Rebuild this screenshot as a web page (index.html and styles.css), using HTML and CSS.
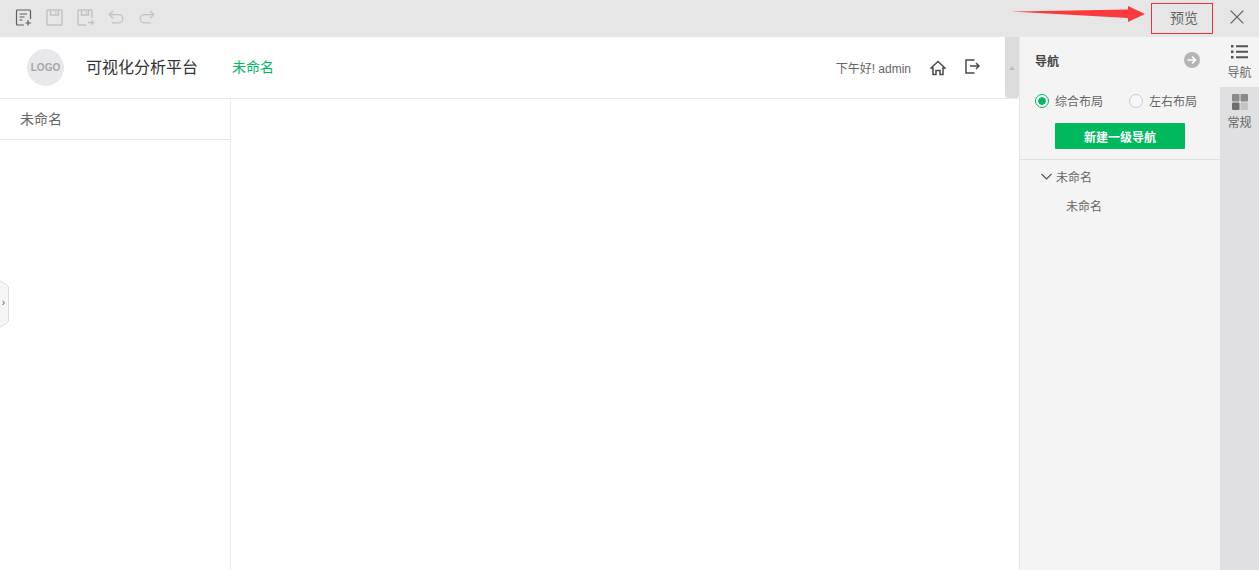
FILE: index.html
```html
<!DOCTYPE html>
<html lang="zh">
<head>
<meta charset="utf-8">
<title>可视化分析平台</title>
<link rel="stylesheet" href="styles.css">
</head>
<body>
<div class="app">
  <div class="toolbar">
    <div class="tools">
      <svg class="tool" width="17" height="17" viewBox="0 0 17 17" fill="none" stroke="#5f5f5f" stroke-width="1.2"><path d="M9 16H2.500a1 1 0 0 1-1-1V2a1 1 0 0 1 1-1h12a1 1 0 0 1 1 1v8"/><path d="M4.500 5h7.500M4.500 8h5M4.500 11h3M13 11v5.500M10.500 14H16"/></svg>
      <svg class="tool" width="17" height="17" viewBox="0 0 17 17" fill="none" stroke="#c2c2c2" stroke-width="1.4"><path d="M1.500 1h14a.5.5 0 0 1 .5.5v14a.5.5 0 0 1-.5.5h-14a.5.5 0 0 1-.5-.5v-14a.5.5 0 0 1 .5-.5z"/><path d="M4.500 1v5h8V1M10 2.500v2"/></svg>
      <svg class="tool" width="17" height="17" viewBox="0 0 17 17" fill="none" stroke="#c2c2c2" stroke-width="1.4"><path d="M9 16H1.500a.5.5 0 0 1-.5-.5v-14a.5.5 0 0 1 .5-.5h13a.5.5 0 0 1 .5.5V9"/><path d="M4.500 1v5h7V1M9.500 2.500v2M11 13.500h5.500M14.500 11.500l2 2-2 2"/></svg>
      <svg class="tool" width="17" height="14" viewBox="0 0 17 14" fill="none" stroke="#c2c2c2" stroke-width="1.3"><path d="M5 1 1.200 4.600 5 8.200M1.500 4.600h9.200a4 4 0 0 1 0 8.200H4"/></svg>
      <svg class="tool" width="16" height="14" viewBox="0 0 16 14" fill="none" stroke="#c2c2c2" stroke-width="1.3"><path d="M11 1l3.800 3.600L11 8.200M14.500 4.600H5.300a4 4 0 0 0 0 8.200H12"/></svg>
    </div>
    <div class="actions">
      <button class="preview">预览</button>
      <svg class="close" width="14" height="14" viewBox="0 0 14 14" fill="none" stroke="#5c5c5c" stroke-width="1.200"><path d="M.7.7l12.600 12.600M13.300.7.7 13.300"/></svg>
    </div>
    <svg class="arrow" width="134" height="20" viewBox="0 0 134 20"><path d="M0 8.500 117 6.500V3L134 11 117 19V15Z" fill="#fb3a3d"/></svg>
    <div class="preview-mark"></div>
  </div>
  <div class="main">
    <div class="canvas">
      <header class="top">
        <div class="logo">LOGO</div>
        <div class="brand">可视化分析平台</div>
        <div class="nav-active">未命名</div>
        <div class="user">
          <span class="greet">下午好! admin</span>
          <svg class="home" width="16" height="16" viewBox="0 0 16 16" fill="none" stroke="#4a4a4a" stroke-width="1.500"><path d="M1 8 8 1.500 15 8 13 8V14.500H10V10.500H6V14.500H3V8Z"/></svg>
          <svg class="exit" width="15" height="15" viewBox="0 0 15 15" fill="none" stroke="#4a4a4a" stroke-width="1.500"><path d="M9.500 1H1v13h8.500M5 7h9M11 4l3 3-3 3"/></svg>
        </div>
        <div class="thumb"><span class="thumb-arrow"></span></div>
      </header>
      <div class="body">
        <aside class="side"><div class="side-item">未命名</div></aside>
        <div class="stage"></div>
      </div>
      <div class="handle">
        <svg class="handle-shape" width="9" height="48" viewBox="0 0 9 48"><path d="M0 .5C2 3 8.500 4 8.500 8V40C8.500 44 2 45 0 47.500" fill="#f5f5f5" stroke="#dcdcdc"/></svg>
        <span class="handle-mark">›</span>
      </div>
    </div>
    <section class="panel">
      <div class="panel-head">
        <b>导航</b>
        <svg width="16" height="16" viewBox="0 0 16 16"><circle cx="8" cy="8" r="8" fill="#b4b4b4"/><path d="M3.500 8h8M8 4.500 11.500 8 8 11.500" fill="none" stroke="#fff" stroke-width="1.600"/></svg>
      </div>
      <div class="radios">
        <label class="radio"><i class="dot on"></i>综合布局</label>
        <label class="radio"><i class="dot"></i>左右布局</label>
      </div>
      <div class="btn-row"><button class="new">新建一级导航</button></div>
      <div class="tree">
        <div class="tree-parent">
          <svg width="11" height="7" viewBox="0 0 11 7" fill="none" stroke="#555" stroke-width="1.200"><path d="M.5 1 5.500 6l5-5"/></svg>未命名
        </div>
        <div class="tree-child">未命名</div>
      </div>
    </section>
    <nav class="tabs">
      <div class="tab tab-nav">
        <svg width="17" height="14" viewBox="0 0 17 14" fill="#555"><path d="M0 0h2.500v2.500H0zM5 .3h12v2H5zM0 5.500h2.500V8H0zM5 5.800h12v2H5zM0 11h2.500v2.500H0zM5 11.300h12v2H5z"/></svg>
        <span>导航</span>
      </div>
      <div class="tab tab-general">
        <svg width="16" height="16" viewBox="0 0 16 16"><rect width="7.500" height="7.500" rx="1" fill="#8a8a8a"/><rect x="8.500" width="7.500" height="7.500" rx="1" fill="#8a8a8a"/><rect y="8.500" width="7.500" height="7.500" rx="1" fill="#6f6f6f"/><rect x="8.500" y="8.500" width="7.500" height="7.500" rx="1" fill="#c4c4c4"/></svg>
        <span>常规</span>
      </div>
    </nav>
  </div>
</div>
</body>
</html>
```
FILE: styles.css
```css
* { box-sizing: border-box; }
html, body { margin: 0; height: 100%; overflow: hidden; }
body { font-family: "Liberation Sans", "Noto Sans CJK SC", sans-serif; font-size: 12px; color: #555; background: #fff; }
.app { display: flex; flex-direction: column; height: 570px; }

.toolbar { position: relative; flex: 0 0 37px; display: flex; justify-content: space-between; align-items: center; background: #e6e6e6; }
.tools { display: flex; align-items: center; gap: 14px; padding: 0 0 3px 15px; }
.tool { display: block; }
.actions { display: flex; align-items: center; height: 37px; }
.preview { width: 62px; height: 31px; margin: 0; border: 0; background: transparent; color: #666; font: 14px "Liberation Sans", "Noto Sans CJK SC", sans-serif; padding: 0 0 4px 4px; }
.close { margin: 0 15px 3px 17px; }
.preview-mark { position: absolute; left: 1151px; top: 3px; width: 62px; height: 31px; border: 1px solid #e8353a; }
.arrow { position: absolute; left: 1011px; top: 3px; }

.main { flex: 1; display: flex; min-height: 0; }
.canvas { position: relative; flex: 1; display: flex; flex-direction: column; min-width: 0; background: #fff; }
.top { position: relative; flex: 0 0 62px; display: flex; align-items: center; padding: 0 39px 0 27px; border-bottom: 1px solid #e8e8e8; }
.logo { width: 37px; height: 37px; border-radius: 50%; background: #e8e8ea; color: #a6a6a6; font-size: 10px; font-weight: 700; display: flex; align-items: center; justify-content: center; }
.brand { margin: 0 0 3px 22px; font-size: 16px; color: #333; }
.nav-active { margin: 0 0 3px 34px; font-size: 14px; color: #00b95f; }
.user { margin-left: auto; display: flex; align-items: center; }
.user svg { display: block; }
.home { margin-left: 19px; }
.exit { margin-left: 19px; margin-bottom: 2px; }
.greet { color: #666; font-size: 12px; }
.thumb { position: absolute; right: 0; top: 0; bottom: 0; width: 14px; background: #dcdcdc; border-radius: 0 0 3px 3px; display: flex; align-items: center; justify-content: center; }
.thumb-arrow { width: 0; height: 0; border-left: 3.500px solid transparent; border-right: 3.500px solid transparent; border-bottom: 4px solid #bdbdbd; }
.body { flex: 1; display: flex; min-height: 0; }
.side { flex: 0 0 231px; border-right: 1px solid #ededed; }
.side-item { height: 41px; padding-left: 20px; line-height: 40px; font-size: 14px; color: #666; border-bottom: 1px solid #e8e8e8; }
.stage { flex: 1; }
.handle { position: absolute; left: 0; top: 243px; width: 9px; height: 48px; padding: 0 2px 2px 0; display: flex; align-items: center; justify-content: center; }
.handle-shape { position: absolute; left: 0; top: 0; }
.handle-mark { position: relative; font-size: 10px; color: #555; line-height: 1; }

.panel { flex: 0 0 201px; min-width: 0; background: #f4f4f4; border-left: 1px solid #e4e4e4; }
.panel-head { display: flex; justify-content: space-between; align-items: center; height: 46px; padding: 0 20px 0 15px; }
.panel-head b { font-size: 12px; color: #444; }
.radios { display: flex; height: 35px; padding-left: 15px; align-items: center; }
.radio { display: flex; flex: 0 0 94px; align-items: center; white-space: nowrap; color: #666; font-size: 12px; }
.radio + .radio { flex-basis: 80px; }
.dot { width: 14px; height: 14px; margin-right: 6px; border-radius: 50%; border: 1px solid #ccc; background: #f7f7f7; display: block; }
.dot.on { border-color: #00b95f; background: radial-gradient(circle, #00b95f 0 3.500px, #fff 4px); }
.btn-row { height: 37px; padding-left: 35px; border-bottom: 1px solid #e2e2e2; margin-top: 5px; }
.new { display: block; width: 130px; height: 26px; border: 0; border-radius: 1px; background: #00b95f; color: #fff; font: 700 12px "Liberation Sans", "Noto Sans CJK SC", sans-serif; padding: 0; }
.tree { color: #666; font-size: 12px; }
.tree-parent { display: flex; align-items: center; gap: 4px; height: 32px; padding-left: 21px; }
.tree-child { height: 30px; line-height: 30px; padding-left: 46px; }

.tabs { flex: 0 0 39px; background: #e0e0e2; }
.tab { height: 50px; display: flex; flex-direction: column; align-items: center; padding-top: 8px; color: #666; font-size: 12px; gap: 7px; }
.tab-nav { background: #f4f4f4; }
.tab-general { padding-top: 7px; gap: 6px; }
.tab span { line-height: 15px; }
```
